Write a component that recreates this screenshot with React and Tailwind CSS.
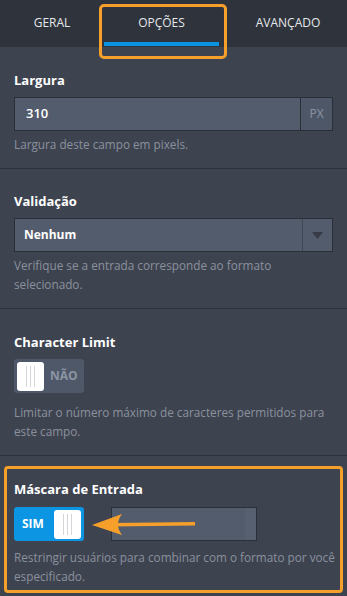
import React from "react";

function Knob() {
  return (
    <div className="w-[27px] h-[29px] bg-white rounded-[3px] flex items-center justify-center gap-[3px]">
      <div className="w-px h-[21px] bg-[#d4d6da]" />
      <div className="w-px h-[21px] bg-[#d4d6da]" />
      <div className="w-px h-[21px] bg-[#d4d6da]" />
    </div>
  );
}

function Helper({ children }) {
  return <p className="text-[11.75px] leading-[19px] text-[#8a919d]">{children}</p>;
}

function Label({ children }) {
  return <div className="text-[13px] leading-[18px] font-bold text-white">{children}</div>;
}

export default function App() {
  return (
    <div
      className="relative w-[347px] h-[596px] overflow-hidden bg-[#3e4350] flex flex-col"
      style={{ fontFamily: '"Open Sans", "Noto Sans", sans-serif' }}
    >
      {/* Tabs */}
      <div className="h-[47px] bg-[#2f333b] flex shrink-0 text-[12px] text-[#e4e7ec]">
        <div className="w-[104px] flex items-center justify-center pb-[1px]">GERAL</div>
        <div className="w-[115px] flex flex-col">
          <div className="flex-1 flex items-center justify-center pt-[3px]">OPÇÕES</div>
          <div className="h-[4px] bg-[#0a93e0] mb-[1px]" />
        </div>
        <div className="flex-1 flex items-center justify-center pb-[1px] pl-[10px]">AVANÇADO</div>
      </div>

      {/* Largura */}
      <div className="px-[14px] pt-[24px] pb-[14px] border-b border-[#2d3139]">
        <Label>Largura</Label>
        <div className="mt-[8px] flex h-[34px] border border-[#2b3038] bg-[#535c6c]">
          <div className="flex-1 flex items-center pl-[11px] text-[13px] font-semibold text-white">310</div>
          <div className="w-[32px] bg-[#4e5767] border-l border-[#2b3038] flex items-center justify-center text-[12px] text-[#8a93a3]">PX</div>
        </div>
        <div className="mt-[4px]">
          <Helper>Largura deste campo em pixels.</Helper>
        </div>
      </div>

      {/* Validação */}
      <div className="px-[14px] pt-[23px] pb-[14px] border-b border-[#2d3139]">
        <Label>Validação</Label>
        <div className="mt-[8px] flex h-[34px] border border-[#2b3038] bg-[#535c6c]">
          <div className="flex-1 flex items-center pl-[9px] text-[12px] font-bold text-white">Nenhum</div>
          <div className="w-[30px] border-l border-[#3f4654] flex items-center justify-center">
            <svg width="11" height="7" viewBox="0 0 11 7">
              <path d="M0 0 L11 0 L5.5 7 Z" fill="#363b45" />
            </svg>
          </div>
        </div>
        <div className="mt-[4px]">
          <Helper>Verifique se a entrada corresponde ao formato selecionado.</Helper>
        </div>
      </div>

      {/* Character Limit */}
      <div className="px-[14px] pt-[24px] pb-[14px] border-b border-[#2d3139]">
        <Label>Character Limit</Label>
        <div className="mt-[8px] w-[70px] h-[34px] rounded-[3px] bg-[#4f5869] flex items-center pl-[3px] gap-[6px]">
          <Knob />
          <span className="text-[12px] font-bold text-[#8c95a3]">NÃO</span>
        </div>
        <div className="mt-[10px]">
          <Helper>Limitar o número máximo de caracteres permitidos para este campo.</Helper>
        </div>
      </div>

      {/* Máscara de Entrada */}
      <div className="mt-[10px] mx-[4px] flex-1 mb-[3px] border-[3px] border-[#f6a02b] rounded-[4px] pl-[7px] pr-0 pt-[11px]">
        <Label>Máscara de Entrada</Label>
        <div className="relative mt-[9px] flex items-center gap-[27px]">
          <div className="w-[70px] h-[34px] rounded-[3px] bg-[#0b95e2] flex items-center justify-between pl-[8px] pr-[3px]">
            <span className="text-[12px] font-bold text-white">SIM</span>
            <Knob />
          </div>
          <div className="w-[146px] h-[34px] border border-[#2b3038] bg-[#535c6c] flex">
            <div className="flex-1" />
            <div className="w-[11px] bg-[#566070]" />
          </div>
          <svg
            className="absolute left-[78px] top-[5px]"
            width="110"
            height="24"
            viewBox="0 0 110 24"
          >
            <path d="M20 11 L103 10 L103 13.5 L20 14.5 Z" fill="#f6a02b" />
            <path d="M0 13 L30 2 Q22 12.5 30 23 Z" fill="#f6a02b" />
          </svg>
        </div>
        <div className="mt-[7px]">
          <Helper>Restringir usuários para combinar com o formato por você especificado.</Helper>
        </div>
      </div>

      {/* Orange highlight around tab */}
      <div className="absolute left-[99px] top-[4px] w-[128px] h-[55px] border-[3px] border-[#f6a02b] rounded-[5px]" />
    </div>
  );
}
